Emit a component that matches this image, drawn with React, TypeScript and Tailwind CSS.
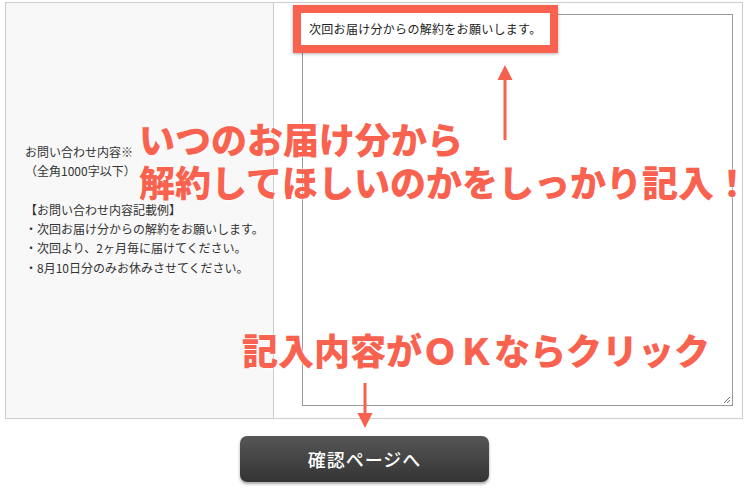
const jp = { fontFamily: '"Noto Sans CJK JP", "Noto Sans", sans-serif' };

function ArrowUp() {
  return (
    <svg width="16" height="76" viewBox="0 0 16 76" className="absolute left-[497px] top-[65px]">
      <rect x="6.5" y="12" width="3" height="63" fill="#f5604f" />
      <polygon points="8,0 15.5,15 0.5,15" fill="#f5604f" />
    </svg>
  );
}

function ArrowDown() {
  return (
    <svg width="16" height="46" viewBox="0 0 16 46" className="absolute left-[357px] top-[383px]">
      <rect x="6.5" y="0" width="3" height="33" fill="#f5604f" />
      <polygon points="0.5,30 15.5,30 8,45" fill="#f5604f" />
    </svg>
  );
}

export default function App() {
  const bigText =
    "absolute text-[36px] font-black leading-[43px] text-[#f9624f] whitespace-nowrap [text-shadow:0_0_2px_#fff,0_0_2px_#fff]";

  return (
    <div className="relative w-[749px] h-[496px] bg-white overflow-hidden" style={jp}>
      {/* form row */}
      <div className="ml-[5px] mt-[2px] w-[738px] h-[417px] flex border border-[#cccccc]">
        <div className="w-[268px] shrink-0 bg-[#f8f8f8] border-r border-[#cccccc] flex items-center pl-[19px] pb-[2px] text-[12px] leading-[19.2px] text-[#333]">
          <div>
            <p>お問い合わせ内容※</p>
            <p>（全角1000字以下）</p>
            <p>&nbsp;</p>
            <p>【お問い合わせ内容記載例】</p>
            <p>・次回お届け分からの解約をお願いします。</p>
            <p>・次回より、2ヶ月毎に届けてください。</p>
            <p>・8月10日分のみお休みさせてください。</p>
          </div>
        </div>
        <div className="flex-1 pl-[28px] pr-[9px] pt-[11px] pb-[12px]">
          <div className="relative h-full border border-[#999999] bg-white">
            <svg width="9" height="9" viewBox="0 0 9 9" className="absolute right-[1px] bottom-[1px]">
              <path d="M8 2 L2 8 M8 5 L5 8" stroke="#777" strokeWidth="1" />
            </svg>
          </div>
        </div>
      </div>

      {/* submit */}
      <div className="mt-[17px] ml-[240px]">
        <button className="w-[249px] h-[46px] rounded-[7px] bg-gradient-to-b from-[#565656] to-[#343434] text-white text-[18px] font-medium tracking-[1px] shadow-[0_2px_3px_rgba(0,0,0,0.35)]">
          確認ページへ
        </button>
      </div>

      {/* annotation overlay */}
      <div className="absolute left-[293px] top-[5px] w-[265px] h-[48px] border-[8px] border-[#f8624f] bg-white shadow-[0_1px_3px_rgba(0,0,0,0.3)] flex items-center pl-[8px] text-[12px] text-[#222] whitespace-nowrap tracking-[0.3px]">
        次回お届け分からの解約をお願いします。
      </div>
      <ArrowUp />
      <div className={`${bigText} left-[139px] top-[117px]`}>
        いつのお届け分から
        <br />
        解約してほしいのかをしっかり記入！
      </div>
      <div className={`${bigText} left-[242px] top-[328px]`}>記入内容がＯＫならクリック</div>
      <ArrowDown />
    </div>
  );
}
